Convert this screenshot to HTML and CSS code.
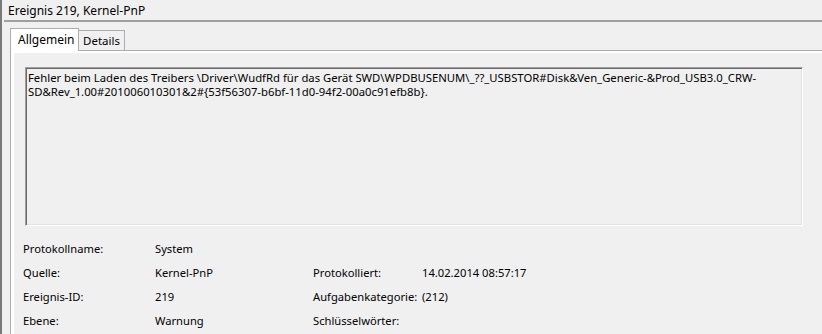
FILE: index.html
```html
<!DOCTYPE html>
<html lang="de">
<head>
    <meta charset="UTF-8">
    <meta name="viewport" content="width=device-width, initial-scale=1.0">
    <title>Ereignis 219, Kernel-PnP</title>
    <link rel="stylesheet" href="styles.css">
</head>
<body>
    <div class="window">
        <div class="title">Ereignis 219, Kernel-PnP</div>
        <div class="divider"></div>

        <div class="tab-area">
            <div class="tab-strip">
                <div class="tab tab-active">Allgemein</div>
                <div class="tab">Details</div>
            </div>

            <div class="panel">
                <div class="panel-inner">
                    <!-- Beschreibung des Ereignisses -->
                    <div class="message">
                        <span class="message-line">Fehler beim Laden des Treibers \Driver\WudfRd für das Gerät SWD\WPDBUSENUM\_??_USBSTOR#Disk&amp;Ven_Generic-&amp;Prod_USB3.0_CRW-</span>
                        <span class="message-line">SD&amp;Rev_1.00#201006010301&amp;2#{53f56307-b6bf-11d0-94f2-00a0c91efb8b}.</span>
                    </div>

                    <div class="props">
                        <div class="prop-label">Protokollname:</div>
                        <div class="prop-value">System</div>
                        <div class="prop-label"></div>
                        <div class="prop-value"></div>

                        <div class="prop-label">Quelle:</div>
                        <div class="prop-value">Kernel-PnP</div>
                        <div class="prop-label">Protokolliert:</div>
                        <div class="prop-value">14.02.2014 08:57:17</div>

                        <div class="prop-label">Ereignis-ID:</div>
                        <div class="prop-value">219</div>
                        <div class="prop-label">Aufgabenkategorie:</div>
                        <div class="prop-value">(212)</div>

                        <div class="prop-label">Ebene:</div>
                        <div class="prop-value">Warnung</div>
                        <div class="prop-label">Schlüsselwörter:</div>
                        <div class="prop-value"></div>
                    </div>
                </div>
            </div>
        </div>
    </div>
</body>
</html>
```

FILE: styles.css
```css
* {
    margin: 0;
    padding: 0;
    box-sizing: border-box;
}

html, body {
    height: 100%;
    overflow: hidden;
}

body {
    background-color: #f0f0f0;
    color: #000;
    font-family: "Noto Sans", "Open Sans", sans-serif;
    font-size: 12px;
}

.window {
    display: flex;
    flex-direction: column;
    height: 100%;
    border-left: 2px solid #7a7a7a;
}

.title {
    height: 20px;
    line-height: 21px;
    padding-left: 6px;
}

.divider {
    margin-left: 2px;
    border-top: 2px solid #a0a0a0;
}

.tab-area {
    flex: 1;
    display: flex;
    flex-direction: column;
    padding: 6px 0 0 8px;
}

.tab-strip {
    display: flex;
    align-items: flex-end;
    height: 22px;
}

.tab {
    position: relative;
    height: 20px;
    line-height: 20px;
    padding: 0 4px;
    font-size: 11.5px;
    background-color: #f0f0f0;
    border: 1px solid #adadad;
    border-left: none;
    border-bottom: none;
}

.tab-active {
    z-index: 1;
    height: 23px;
    width: 69px;
    margin-bottom: -1px;
    padding: 0 7px;
    font-size: 12px;
    line-height: 21px;
    background-color: #fff;
    border-left: 1px solid #adadad;
}

.panel {
    flex: 1;
    padding: 2px 0 0 3px;
    background-color: #fff;
    border-top: 1px solid #adadad;
    border-left: 1px solid #adadad;
}

.panel-inner {
    height: 100%;
    padding: 14px 0 0 11px;
    background-color: #f0f0f0;
}

.message {
    width: 778px;
    height: 159px;
    padding: 3px 2px;
    font-size: 11.3px;
    line-height: 14px;
    border: 1px solid;
    border-color: #a0a0a0 #fff #fff #a0a0a0;
    box-shadow: inset 1px 1px 0 #696969, inset -1px -1px 0 #e3e3e3;
}

.message-line {
    display: block;
    white-space: nowrap;
}

.props {
    display: grid;
    grid-template-columns: 132px 158px 109px auto;
    grid-auto-rows: 24px;
    align-items: center;
    margin: 10px 0 0 -2px;
    font-size: 11.2px;
}
```
